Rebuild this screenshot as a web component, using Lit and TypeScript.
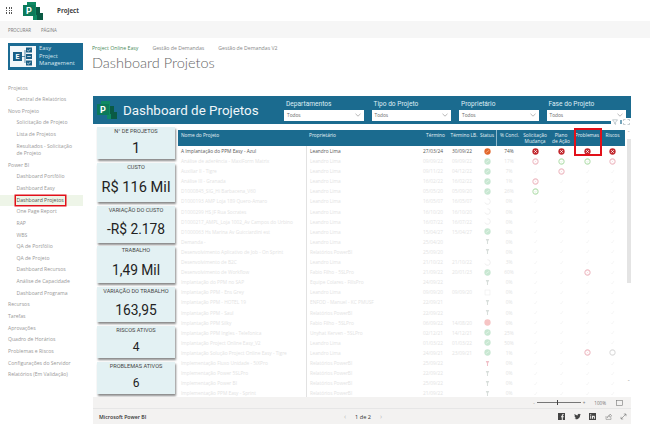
import { LitElement, html, css, svg } from 'lit';
import { customElement } from 'lit/decorators.js';

type Row = [string, string, string, string, string, string, string];

const NAV: [string, string][] = [
  ['top', 'Projetos'],
  ['sub', 'Central de Relatórios'],
  ['top', 'Novo Projeto'],
  ['sub', 'Solicitação de Projeto'],
  ['sub', 'Lista de Projetos'],
  ['sub wrap', 'Resultados - Solicitação de Projeto'],
  ['top', 'Power BI'],
  ['sub', 'Dashboard Portfólio'],
  ['sub', 'Dashboard Easy'],
  ['sub on', 'Dashboard Projetos'],
  ['sub', 'One Page Report'],
  ['sub', 'RAP'],
  ['sub', 'WBS'],
  ['sub', 'QA de Portfólio'],
  ['sub', 'QA de Projeto'],
  ['sub', 'Dashboard Recursos'],
  ['sub', 'Análise de Capacidade'],
  ['sub', 'Dashboard Programa'],
  ['top', 'Recursos'],
  ['top', 'Tarefas'],
  ['top', 'Aprovações'],
  ['top', 'Quadro de Horários'],
  ['top', 'Problemas e Riscos'],
  ['top', 'Configurações do Servidor'],
  ['top', 'Relatórios (Em Validação)'],
];

const CARDS: [string, string, string][] = [
  ['N° DE PROJETOS', '1', 'xl'],
  ['CUSTO', 'R$ 116 Mil', 'xl'],
  ['VARIAÇÃO DO CUSTO', '-R$ 2.178', 'lg'],
  ['TRABALHO', '1,49 Mil', 'lg'],
  ['VARIAÇÃO DO TRABALHO', '163,95', 'lg'],
  ['RISCOS ATIVOS', '4', 'md'],
  ['PROBLEMAS ATIVOS', '6', 'md'],
];

const LEANDRO = 'Leandro Lima';
const POWERBI = 'Relatórios PowerBI';

// name, owner, end, baseline end, status, % done, the four flags
const ROWS: Row[] = [
  ['A Implantação do PPM Easy - Azul', LEANDRO, '27/03/24', '30/09/22', 'o', '74%', 'rrrr'],
  ['Análise de aderência - MaxiForm Matrix', LEANDRO, '09/09/22', '09/09/22', 'g', '17%', 'pggp'],
  ['Auxiliar II - Tigre', LEANDRO, '09/11/22', '04/12/22', 'g', '7%', '.p..'],
  ['Análise III - Granada', LEANDRO, '16/02/22', '16/02/22', 'g', '1%', 'p...'],
  ['D1000845_SIG_Hi Barbacena_V60', LEANDRO, '05/05/20', '05/09/20', 'g', '26%', 'g...'],
  ['D1000193 AMP Loja 189 Quero-Amaro', LEANDRO, '16/05/07', '16/05/07', 'c', '0%', '....'],
  ['D1000299 HS JF Rua Socrates', LEANDRO, '16/10/20', '16/10/20', 'c', '0%', '....'],
  ['D1000217_AMPL_Loja 1002_Av Campos do Urbino', LEANDRO, '16/07/22', '16/07/22', 'c', '0%', '....'],
  ['D1000063 Hs Marina Av Guicciardini est', LEANDRO, '15/04/27', '15/04/27', 'g', '0%', '....'],
  ['Demanda -', LEANDRO, '25/04/20', '', 'i', '0%', '....'],
  ['Desenvolvimento Aplicativo de Job - On Sprint', POWERBI, '25/09/20', '', 'i', '0%', '....'],
  ['Desenvolvimento de B2C', LEANDRO, '21/10/22', '21/10/22', 'c', '3%', '....'],
  ['Desenvolvimento de Workflow', 'Fabio Filho - 5SLPro', '21/09/22', '20/01/23', 'g', '60%', '..p.'],
  ['Implantação do PPM no SAP', 'Equipe Colares - FillsPro', '24/09/22', '', 'i', '0%', '....'],
  ['Implantação PPM - Ens Grey', LEANDRO, '09/09/20', '09/09/20', 's', '0%', '....'],
  ['Implantação PPM - HOTEL 19', 'ENFOD - Manuel - KC PMUSF', '22/09/21', '', 'i', '0%', '....'],
  ['Implantação PPM - Saul', POWERBI, '22/09/22', '', 'i', '0%', '....'],
  ['Implantação PPM Silky', 'Fabio Filho - 5SLPro', '06/09/22', '14/08/20', 'R', '0%', '....'],
  ['Implantação PPM Ingles - Telefonica', 'Unyhat Kerven - 5SLPro', '02/12/21', '14/12/21', 'g', '25%', '....'],
  ['Implantação Project Online Easy_V2', LEANDRO, '01/03/22', '01/03/22', 'g', '50%', '....'],
  ['Implantação Solução Project Online Easy - Tigre', LEANDRO, '24/09/21', '23/09/21', 'g', '1%', '..px'],
  ['Implementação Fluxo Unidade - 5iXPro', POWERBI, '25/09/22', '', 'P', '0%', '....'],
  ['Implementação Power 5SLPro', POWERBI, '22/09/22', '', 'i', '0%', '....'],
  ['Implementação Power BI', POWERBI, '25/09/22', '', 'i', '0%', '....'],
  ['Implementação PPM Easy - Sprint', POWERBI, '21/09/22', '', 'i', '0%', '....'],
];

const projectLogo = (size: number) => html`
  <svg width=${size} height=${size} viewBox="0 0 20 20">
    <path d="M4 1h9v5h4v6h3v7H10v-5H4z" fill="#0f8a63" />
    <path d="M13 6h4v6h3v7h-6v-5h-1z" fill="#0a5a44" />
    <rect x="0" y="4" width="12" height="11" fill="#0c7a5a" />
    ${svg`<text x="6" y="13" text-anchor="middle" font-size="9" font-weight="700" font-family="Roboto, sans-serif" fill="#fff">P</text>`}
  </svg>
`;

function flagIcon(code: string) {
  if (code === 'r') {
    return html`<svg class="ic" viewBox="0 0 8 8"><circle cx="4" cy="4" r="3.6" fill="#c2272d" /><path d="M2.6 2.6l2.8 2.8M5.4 2.6L2.6 5.4" stroke="#fff" stroke-width="1" /></svg>`;
  }
  if (code === 'p') {
    return html`<svg class="ic" viewBox="0 0 8 8"><circle cx="4" cy="4" r="3" fill="#fff" stroke="#eebcc4" stroke-width="1.2" /><path d="M3 3l2 2M5 3L3 5" stroke="#f5d4d9" stroke-width=".7" /></svg>`;
  }
  if (code === 'g') {
    return html`<svg class="ic" viewBox="0 0 8 8"><circle cx="4" cy="4" r="3" fill="#fff" stroke="#b7e0b2" stroke-width="1.2" /><path d="M2.8 4l1 1 1.5-2" fill="none" stroke="#d0ebcc" stroke-width=".7" /></svg>`;
  }
  if (code === 'x') {
    return html`<svg class="ic" viewBox="0 0 8 8"><circle cx="4" cy="4" r="3" fill="#fff" stroke="#dcdcdc" stroke-width="1.2" /></svg>`;
  }
  return html`<svg class="ic" viewBox="0 0 8 8"><path d="M2.4 4.4l1.2 1.2 2-3.2" fill="none" stroke="#f2f2f2" stroke-width=".8" /></svg>`;
}

function statusIcon(code: string) {
  if (code === 'o') {
    return html`<svg class="st" viewBox="0 0 8 8"><circle cx="4" cy="4" r="3.6" fill="#e2672b" /><path d="M2 5.5L6 2.5" stroke="#f3a77f" stroke-width="1" /></svg>`;
  }
  if (code === 'g') {
    return html`<svg class="st" viewBox="0 0 8 8"><circle cx="4" cy="4" r="3.6" fill="#c8e7d2" /><path d="M2 5.5L6 2.5" stroke="#e0f2e6" stroke-width="1" /></svg>`;
  }
  if (code === 'R') {
    return html`<svg class="st" viewBox="0 0 8 8"><circle cx="4" cy="4" r="3.6" fill="#f6c4c4" /></svg>`;
  }
  if (code === 'c') {
    return html`<svg class="st" viewBox="0 0 8 8"><path d="M4 .8a3.2 3.2 0 1 1-3 4.3" fill="none" stroke="#ebebeb" stroke-width=".9" /></svg>`;
  }
  if (code === 's') {
    return html`<svg class="st" viewBox="0 0 8 8"><rect x="1.2" y="1.2" width="5.6" height="5.6" fill="none" stroke="#efefef" stroke-width=".8" /></svg>`;
  }
  const color = code === 'P' ? '#f0bfc7' : '#d8dedb';
  return html`<svg class="st" viewBox="0 0 8 8"><path d="M2 1.2h4L4.6 4v2.8H3.4V4z" fill=${color} /></svg>`;
}

@customElement('app-root')
export class AppRoot extends LitElement {
  static styles = css`
    :host {
      display: block;
      width: 650px;
      height: 441px;
      overflow: hidden;
      background: #fff;
      font-family: "Open Sans", "Liberation Sans", sans-serif;
      color: #666;
    }
    .topbar {
      height: 21px;
      display: flex;
      align-items: center;
      padding-left: 6px;
    }
    .waffle {
      width: 7px;
      display: grid;
      grid-template-columns: repeat(3, 1.2px);
      gap: 1.4px;
      margin-right: 10px;
    }
    .waffle i {
      width: 1.2px;
      height: 1.2px;
      background: #555;
    }
    .app-name {
      margin-left: 14px;
      font-size: 6.2px;
      font-weight: 700;
      color: #444;
    }
    .ribbon {
      height: 17px;
      background: #f6f6f6;
      display: flex;
      align-items: center;
      gap: 10px;
      padding-left: 8px;
      font-size: 4.4px;
      color: #777;
    }
    .page {
      display: flex;
    }
    aside {
      width: 92px;
      flex: none;
      padding-top: 5px;
    }
    .easy {
      width: 75px;
      height: 27px;
      margin-left: 8px;
      margin-bottom: 12.5px;
      background: #1b6b93;
      display: flex;
      align-items: center;
      gap: 3px;
      padding-left: 2px;
      box-sizing: border-box;
      color: #d9e8f0;
      font-size: 5.8px;
      line-height: 7.4px;
    }
    .nav-item {
      height: 11.65px;
      line-height: 11.65px;
      font-size: 5.1px;
      color: #999;
      white-space: nowrap;
      padding-left: 8px;
    }
    .nav-item.sub {
      padding-left: 16.5px;
    }
    .nav-item.wrap {
      height: 19px;
      line-height: 7.6px;
      padding-top: 2px;
      box-sizing: border-box;
      white-space: normal;
      width: 74px;
    }
    .nav-item.on {
      width: 83px;
      box-sizing: border-box;
      background: #eef5e8;
      color: #555;
    }
    .nav-item.on span {
      box-shadow: 0 0 0 1.5px #e2101a;
      padding: 1px;
      margin-left: -1px;
      display: inline-block;
      line-height: 7px;
    }
    main {
      flex: 1;
      min-width: 0;
      padding-top: 6px;
    }
    .tabs {
      display: flex;
      gap: 14px;
      height: 8px;
      line-height: 8px;
      font-size: 5.2px;
      margin-bottom: 2px;
      color: #888;
    }
    .tabs .cur {
      color: #4a8a5a;
    }
    h1 {
      margin: 0 0 24px;
      height: 18px;
      line-height: 18px;
      font-family: Lato, sans-serif;
      font-size: 14.5px;
      font-weight: 300;
      color: #666;
      white-space: nowrap;
    }
    .report {
      position: relative;
      width: 538px;
      margin-left: 1px;
    }
    .head {
      height: 28px;
      background: #1b6b8f;
      display: flex;
      align-items: center;
      padding-left: 4px;
      color: #fff;
    }
    .head-title {
      width: 161px;
      margin-left: 6px;
      font-family: Roboto, sans-serif;
      font-size: 13.4px;
      white-space: nowrap;
      color: #f0f6f9;
    }
    .slicers {
      display: grid;
      grid-template-columns: repeat(4, 79.5px);
      column-gap: 8px;
    }
    .slicer label {
      display: block;
      font-family: Roboto, sans-serif;
      font-size: 6.6px;
      line-height: 9px;
      padding-left: 2px;
      margin-bottom: 1.5px;
      color: #dfeef5;
    }
    .drop {
      height: 10.5px;
      background: #fff;
      color: #666;
      font-size: 4.8px;
      display: flex;
      align-items: center;
      justify-content: space-between;
      padding: 0 3px;
      box-sizing: border-box;
    }
    .drop svg {
      width: 6px;
      height: 4px;
    }
    .body {
      height: 273px;
      display: flex;
      padding-left: 4px;
      box-sizing: border-box;
      overflow: hidden;
    }
    .cards {
      width: 78px;
      flex: none;
      padding-top: 3px;
      display: grid;
      grid-template-rows: 32px 39px 37px 37px 35px 32px 32px;
      row-gap: 3.8px;
      align-content: start;
    }
    .card {
      display: flex;
      flex-direction: column;
      background: #e3f1f3;
      box-shadow: 1px 2px 2px #8a8a8a;
      text-align: center;
      font-family: Roboto, sans-serif;
      color: #222;
      overflow: hidden;
    }
    .card-label {
      font-size: 5.6px;
      line-height: 9px;
      color: #444;
      white-space: nowrap;
    }
    .card-value {
      flex: 1;
      display: flex;
      align-items: center;
      justify-content: center;
      padding-top: 1px;
      white-space: nowrap;
    }
    .card-value.xl {
      font-size: 14.6px;
    }
    .card-value.lg {
      font-size: 13.8px;
    }
    .card-value.md {
      font-size: 12px;
    }
    .table-wrap {
      width: 447px;
      flex: none;
      margin-left: 3px;
      margin-top: 6px;
      overflow: hidden;
    }
    .cols {
      display: grid;
      grid-template-columns: 128px 115px 29px 28px 18px 26px 26px 26px 26px 25px;
    }
    .thead {
      height: 15.5px;
      background: #1b6b8f;
      color: #e8f2f6;
      font-size: 4.8px;
      line-height: 6px;
      padding-top: 1.5px;
      box-sizing: border-box;
      margin-bottom: 0.5px;
    }
    .thead div {
      text-align: center;
      white-space: nowrap;
    }
    .thead .left {
      text-align: left;
      padding-left: 3px;
    }
    .thead .div {
      border-left: 0.5px solid #8fb9cc;
      height: 14px;
      margin-top: -1.5px;
      padding-top: 1.5px;
    }
    .tr {
      height: 10.1px;
      line-height: 10.1px;
      font-size: 4.8px;
      color: #e3e3e3;
    }
    .tr.first {
      color: #555;
    }
    .tr > div {
      white-space: nowrap;
      overflow: hidden;
      display: flex;
      align-items: center;
    }
    .tr .name {
      padding-left: 3px;
    }
    .tr .owner {
      padding-left: 3px;
      border-left: 0.5px solid #e2e2e2;
      box-sizing: border-box;
    }
    .tr .date {
      padding-left: 2px;
    }
    .tr .mid {
      justify-content: center;
    }
    .ic,
    .st {
      width: 7px;
      height: 7px;
    }
    .scroll {
      width: 5px;
      margin-left: 1px;
      margin-top: 6px;
      display: flex;
      flex-direction: column;
      align-items: center;
      font-size: 4px;
      color: #999;
    }
    .thumb {
      width: 4px;
      height: 144px;
      margin-top: 4px;
      background: #e4e4e4;
    }
    .scroll-down {
      margin-top: 94px;
    }
    .hl-box {
      position: absolute;
      left: 481px;
      top: 32px;
      width: 24px;
      height: 24px;
      border: 2px solid #e2101a;
    }
    .tools {
      position: absolute;
      right: 0;
      top: 21.5px;
      display: flex;
      gap: 1.5px;
      align-items: center;
      background: #fff;
      padding: 1px;
    }
    .tools svg {
      display: block;
    }
    .zoombar {
      height: 11px;
      background: #f3f2f1;
      border-bottom: 0.5px solid #e6e6e6;
      display: flex;
      align-items: center;
      justify-content: flex-end;
      padding-right: 8px;
      gap: 2px;
      font-size: 4.6px;
      color: #777;
    }
    .slider {
      width: 44px;
      height: 1px;
      background: #777;
      position: relative;
    }
    .slider i {
      position: absolute;
      left: 20px;
      top: -2px;
      width: 1.5px;
      height: 5px;
      background: #444;
    }
    .pct {
      margin: 0 8px 0 7px;
    }
    .foot {
      height: 15px;
      background: #f3f2f1;
      display: grid;
      grid-template-columns: 1fr auto 1fr;
      align-items: center;
      padding: 0 4px 0 6px;
      font-size: 5.2px;
      color: #333;
    }
    .brand {
      font-weight: 600;
    }
    .pager {
      display: flex;
      gap: 9px;
      align-items: center;
      font-size: 5.6px;
    }
    .pager b {
      font-weight: 400;
      color: #bbb;
      font-size: 7px;
    }
    .share {
      display: flex;
      justify-content: flex-end;
      align-items: center;
      gap: 8.5px;
    }
    .share svg {
      width: 7px;
      height: 7px;
      display: block;
    }
  `;

  render() {
    return html`
      <div class="topbar">
        <div class="waffle">${Array.from({ length: 9 }, () => html`<i></i>`)}</div>
        ${projectLogo(20)}
        <span class="app-name">Project</span>
      </div>
      <div class="ribbon"><span>PROCURAR</span><span>PÁGINA</span></div>
      <div class="page">
        <aside>
          <div class="easy">
            <svg width="26" height="21" viewBox="0 0 26 21">
              <rect width="26" height="21" fill="#f4f8fa" />
              <rect x="3" y="6" width="9" height="9" fill="#1b5f85" />
              ${svg`<text x="7.5" y="13.4" text-anchor="middle" font-size="7" font-weight="700" font-family="Roboto, sans-serif" fill="#fff">E</text>`}
              <path d="M12 10.5h3M15 4v13" stroke="#1b5f85" stroke-width=".7" />
              <rect x="16" y="1.5" width="6" height="5" fill="#1b5f85" />
              <rect x="16" y="8" width="6" height="5" fill="#1b5f85" />
              <rect x="16" y="14.5" width="6" height="5" fill="#1b5f85" />
              <path d="M17.2 4l1.2 1.2 2.2-2.4M17.2 10.5h3.6M17.2 17l1.2 1.2 2.2-2.4" fill="none" stroke="#fff" stroke-width=".7" />
            </svg>
            <div>Easy<br />Project<br />Management</div>
          </div>
          ${NAV.map(
            ([kind, label]) => html`<div class="nav-item ${kind}"><span>${label}</span></div>`
          )}
        </aside>
        <main>
          <div class="tabs">
            <span class="cur">Project Online Easy</span>
            <span>Gestão de Demandas</span>
            <span>Gestão de Demandas V2</span>
          </div>
          <h1>Dashboard Projetos</h1>
          <div class="report">
            <div class="head">
              ${projectLogo(20)}
              <div class="head-title">Dashboard de Projetos</div>
              <div class="slicers">
                ${['Departamentos', 'Tipo do Projeto', 'Proprietário', 'Fase do Projeto'].map(
                  (label) => html`
                    <div class="slicer">
                      <label>${label}</label>
                      <div class="drop">
                        Todos
                        <svg viewBox="0 0 6 4"><path d="M.5 .8L3 3.2 5.5 .8" fill="none" stroke="#888" stroke-width=".6" /></svg>
                      </div>
                    </div>
                  `
                )}
              </div>
            </div>
            <div class="body">
              <div class="cards">
                ${CARDS.map(
                  ([label, value, size]) => html`
                    <div class="card">
                      <div class="card-label">${label}</div>
                      <div class="card-value ${size}">${value}</div>
                    </div>
                  `
                )}
              </div>
              <div class="table-wrap">
                <div class="cols thead">
                  <div class="left">Nome do Projeto</div>
                  <div class="left">Proprietário</div>
                  <div>Término</div>
                  <div>Término LB.</div>
                  <div>Status</div>
                  <div class="div">% Concl.</div>
                  <div>Solicitação<br />Mudança</div>
                  <div>Plano<br />de Ação</div>
                  <div>Problemas</div>
                  <div>Riscos</div>
                </div>
                ${ROWS.map(
                  (r, i) => html`
                    <div class="cols tr ${i === 0 ? 'first' : ''}">
                      <div class="name">${r[0]}</div>
                      <div class="owner">${r[1]}</div>
                      <div class="date">${r[2]}</div>
                      <div class="date">${r[3]}</div>
                      <div class="mid">${statusIcon(r[4])}</div>
                      <div class="mid">${r[5]}</div>
                      ${r[6].split('').map((c) => html`<div class="mid">${flagIcon(c)}</div>`)}
                    </div>
                  `
                )}
              </div>
              <div class="scroll">
                <span>⌃</span>
                <div class="thumb"></div>
                <span class="scroll-down">⌄</span>
              </div>
            </div>
            <div class="hl-box"></div>
            <div class="tools">
              <svg width="6" height="6" viewBox="0 0 6 6"><path d="M.5 .8h5L3.6 3.2v2.2L2.4 4.6V3.2z" fill="none" stroke="#8a9aa3" stroke-width=".5" /></svg>
              <svg width="2" height="6" viewBox="0 0 2 6"><rect x=".4" y="1" width="1.2" height="4" fill="#1b6b8f" /></svg>
              <svg width="7" height="6" viewBox="0 0 7 6"><path d="M.5 2V.5h2M4.5 .5h2V2M6.5 4v1.5h-2M2.5 5.5h-2V4" fill="none" stroke="#8a9aa3" stroke-width=".5" /></svg>
            </div>
            <div class="zoombar">
              <span>-</span>
              <div class="slider"><i></i></div>
              <span>+</span>
              <span class="pct">100%</span>
              <svg width="7" height="6" viewBox="0 0 7 6"><rect x=".5" y=".5" width="6" height="5" fill="none" stroke="#777" stroke-width=".6" /></svg>
            </div>
            <div class="foot">
              <span class="brand">Microsoft Power BI</span>
              <div class="pager"><b>‹</b><span>1 de 2</span><b>›</b></div>
              <div class="share">
                <svg viewBox="0 0 7 7"><rect width="7" height="7" fill="#444" /><path d="M4.8 7V4.3h.9l.1-1H4.8v-.7c0-.3.1-.5.5-.5h.5V1.2h-.8c-.8 0-1.2.5-1.2 1.2v.9h-.8v1h.8V7z" fill="#f3f2f1" /></svg>
                <svg viewBox="0 0 7 7"><path d="M7 1.5l-.8.2.6-.7-.8.3a1.4 1.4 0 0 0-2.4 1.2A4 4 0 0 1 .7 1a1.4 1.4 0 0 0 .4 1.9L.5 2.7c0 .7.5 1.2 1.1 1.4H1c.2.5.6.9 1.3.9A3 3 0 0 1 0 5.6a4 4 0 0 0 6.2-3.5z" fill="#444" /></svg>
                <svg viewBox="0 0 7 7"><rect width="7" height="7" fill="#444" /><path d="M1.2 2.8h1v3h-1zM1.2 1.2h1v1h-1zM3 2.8h1v.4c.5-.7 1.9-.7 1.9.7v1.9h-1V4.2c0-.7-.9-.7-.9 0v1.6H3z" fill="#f3f2f1" /></svg>
                <svg viewBox="0 0 7 7"><path d="M1 3v3.4h5V4.6M2.2 4.8C2.4 3 3.6 2.2 5 2.2V1l1.8 1.8L5 4.4V3.2c-1.2 0-2 .5-2.8 1.6z" fill="none" stroke="#777" stroke-width=".5" /></svg>
                <svg viewBox="0 0 7 7"><path d="M1 6l5-5M3.8 1H6v2.2M1 3.8V6h2.2" fill="none" stroke="#777" stroke-width=".6" /></svg>
              </div>
            </div>
          </div>
        </main>
      </div>
    `;
  }
}
